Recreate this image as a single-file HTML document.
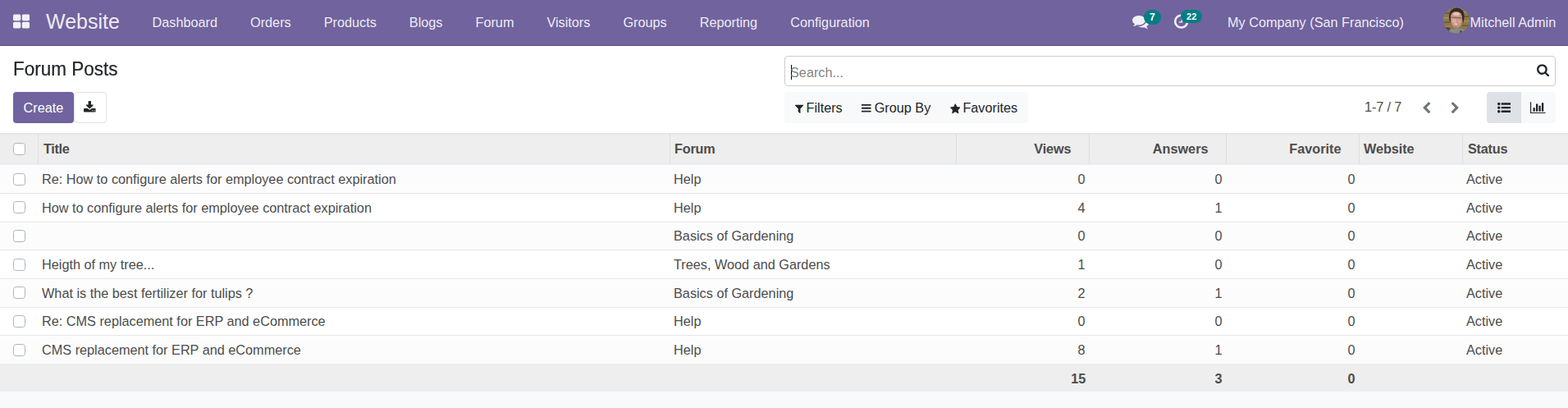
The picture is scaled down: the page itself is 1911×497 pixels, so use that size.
<!DOCTYPE html>
<html lang="en">
<head>
<meta charset="utf-8">
<title>Odoo - Forum Posts</title>
<style>
*{box-sizing:border-box;margin:0;padding:0}
html,body{width:1911px;height:497px;overflow:hidden}
body{font-family:"Liberation Sans",Arial,sans-serif;font-size:16.25px;line-height:24px;color:#4c4c4c;background:#f8f9fa;position:relative}
a{text-decoration:none;color:inherit}
button{font:inherit;color:inherit;border:0;background:none;display:block}
svg.fa{display:block;flex:none}
/* ---------- navbar ---------- */
.navbar{position:absolute;left:0;top:0;width:1911px;height:56px;background:#71639e;border-bottom:1px solid #5f5389;color:rgba(255,255,255,.9)}
.navbar a{position:absolute;top:0;height:55px;line-height:55px;white-space:nowrap}
.navbar .apps{left:16px;width:21px}
.navbar .apps svg{position:absolute;top:15.5px;left:0}
.navbar .brand{left:56px;font-size:25px;line-height:53px}
.menu{position:absolute;left:165.5px;top:0;height:55px;display:flex}
.menu a{position:static;display:block;padding:0 20px}
.tray svg{position:absolute;left:0}
.tray.msg{left:1380px}
.tray.msg svg{top:16.2px}
.tray.act{left:1430.8px}
.tray.act svg{top:16.2px}
.badge{position:absolute;border-radius:20px;background:#017e84;color:#fff;font-weight:bold;text-align:center;line-height:1}
.badge.b1{left:14px;top:11.8px;width:21px;height:18.2px;font-size:12.19px;padding-top:3px}
.badge.b2{left:8.5px;top:11.9px;width:25.7px;height:16px;font-size:11px;padding-top:3.3px}
.company{left:1496px}
.user{left:1759px}
.avatar{position:absolute;left:0;top:8.5px;width:32px;height:32px;line-height:0}
.avatar svg{display:block}
.uname{position:absolute;left:32.5px;top:0}
/* ---------- control panel ---------- */
.cp{position:absolute;left:0;top:56px;width:1911px;height:107px;background:#fff;border-bottom:1px solid #dee2e6}
.title{position:absolute;left:16px;top:12px;transform:scaleY(1.1);transform-origin:0 15.7px;-webkit-text-stroke:0.2px #212529;font-size:22.5px;font-weight:normal;line-height:32px;color:#212529;white-space:nowrap}
.search{position:absolute;left:956px;top:12px;width:940px;height:37px;border:1px solid #ccc;border-radius:4px;background:#fff}
.search .ph{position:absolute;left:6px;top:7px;line-height:24px;color:#848484}
.search .caret{position:absolute;left:7px;top:10px;width:1px;height:18px;background:#000}
.search svg{position:absolute;right:6.5px;top:8px;color:#212529}
.btns{position:absolute;left:16px;top:56px;height:38px}
.create{position:absolute;left:0;top:0;width:74px;height:38px;background:#71639e;color:#fff;border-radius:4px;text-align:center;line-height:38px}
.dl{position:absolute;left:74px;top:0;width:40px;height:38px;border:1px solid #dee2e6;border-radius:4px;background:#fff;color:#212529}
.dl svg{position:absolute;left:11.3px;top:9.7px}
.filters{position:absolute;left:956px;top:56px;height:38px;width:297px;background:#f8f9fa;border-radius:4px;color:#212529;white-space:nowrap}
.filters button{position:absolute;top:0;height:38px;line-height:38px;white-space:nowrap}
.filters button svg{position:absolute;left:0;top:13.6px}
.filters button span{position:absolute;top:0}
.filters .f1{left:12.1px}.filters .f1 span{left:14.4px}.filters .f1 svg{left:0.45px}.filters .f2 svg{top:13.1px}
.filters .f2{left:94.1px}.filters .f2 span{left:15.6px}
.filters .f3{left:201.5px}.filters .f3 span{left:15.9px}
.pager{position:absolute;left:1663px;top:56px;height:38px;line-height:36px;color:#4c4c4c;white-space:nowrap}

.pager .cnt{letter-spacing:-0.13px}
.pager button{position:absolute;top:0;height:38px;width:34px;color:#6f7479}
.pager button svg{position:absolute;top:12.1px}
.pager .pv{left:60px}.pager .pv svg{left:9.95px}
.pager .nx{left:94px}.pager .nx svg{left:10.9px}
.views{position:absolute;left:1812px;top:56px;width:84px;height:38px;background:#f8f9fa;border-radius:4px;overflow:hidden}
.views button{position:absolute;top:0;width:42px;height:38px;color:#212529}
.views button.active{left:0;background:#dee2e6}
.views .v2{left:42px}
.views button svg{position:absolute;top:11px}
.views .v1 svg{left:12.9px}
.views .v2 svg{left:11.4px}
/* ---------- list ---------- */
.content{position:absolute;left:0;top:163px;width:1911px;height:334px}
.thead{position:absolute;left:0;top:0;width:1911px;height:37px;background:#eee;border-top:1px solid #e7e9ec;border-bottom:2px solid #e9ecef;font-weight:bold}
.th,.td{position:absolute;top:0;height:100%;white-space:nowrap}
.th span,.td span{position:absolute;line-height:24px}
.th span{top:6px}
.th.c1,.th.c2,.th.c3,.th.c4,.th.c5,.th.c6,.th.c7{border-left:1px solid #dedede}
.th{height:36px;top:-1px}
.th.sel,.td.sel{left:0;width:46px}
.cb{position:absolute;left:16px;width:15px;height:15px;border:1px solid #adb5bd;border-radius:3.5px;background:#fff}
.th .cb{top:11px}
.td .cb{top:11px}
.c1{left:46px;width:770px}
.c2{left:816px;width:349px}
.c3{left:1165px;width:162px}
.c4{left:1327px;width:167px}
.c5{left:1494px;width:162px}
.c6{left:1656px;width:126px}
.c7{left:1782px;width:129px}
.th span{left:6px}
.td span{left:5px;top:6px}
.th.num span{left:auto;right:21.5px}
.th.c1 span{letter-spacing:-0.32px}
.th.c2 span{left:5px;letter-spacing:-0.2px}
.th.c3 span{letter-spacing:-0.1px}
.th.c6 span{left:5px;letter-spacing:-0.08px}
.th.c7 span{letter-spacing:-0.25px}
.td.num span{left:auto;right:4.4px}
.tbody{position:absolute;left:0;top:0;width:1911px}
.tr{position:absolute;left:0;width:1911px;border-top:1px solid #e4e7ea;background:#fff}
.tr.odd{background:#fcfcfc}
.tr:first-child{border-top-color:#e9ecef}
.tr .td{top:-1px}
.tfoot{position:absolute;left:0;width:1911px;height:34px;background:#eee;font-weight:bold}
.tfoot .td span{top:6px}
.tfoot .c3 span{right:4px;letter-spacing:-0.2px}

</style>
</head>
<body>
<header class="navbar">
  <a class="apps"><svg class="fa fa-th-large" width="20.122" height="21.670" viewBox="0 0 1664 1792" style="" aria-hidden="true"><path fill="currentColor" transform="translate(0,1536) scale(1,-1)" d="M768 512v-384q0 -52 -38 -90t-90 -38h-512q-52 0 -90 38t-38 90v384q0 52 38 90t90 38h512q52 0 90 -38t38 -90zM768 1280v-384q0 -52 -38 -90t-90 -38h-512q-52 0 -90 38t-38 90v384q0 52 38 90t90 38h512q52 0 90 -38t38 -90zM1664 512v-384q0 -52 -38 -90t-90 -38 h-512q-52 0 -90 38t-38 90v384q0 52 38 90t90 38h512q52 0 90 -38t38 -90zM1664 1280v-384q0 -52 -38 -90t-90 -38h-512q-52 0 -90 38t-38 90v384q0 52 38 90t90 38h512q52 0 90 -38t38 -90z"/></svg></a>
  <a class="brand">Website</a>
  <nav class="menu"><a>Dashboard</a><a>Orders</a><a>Products</a><a>Blogs</a><a>Forum</a><a>Visitors</a><a>Groups</a><a>Reporting</a><a>Configuration</a></nav>
  <div class="systray">
    <a class="tray msg"><svg class="fa fa-comments" width="20.312" height="20.312" viewBox="0 0 1792 1792" style="" aria-hidden="true"><path fill="currentColor" transform="translate(0,1536) scale(1,-1)" d="M1408 768q0 -139 -94 -257t-256.5 -186.5t-353.5 -68.5q-86 0 -176 16q-124 -88 -278 -128q-36 -9 -86 -16h-3q-11 0 -20.5 8t-11.5 21q-1 3 -1 6.5t0.5 6.5t2 6l2.5 5t3.5 5.5t4 5t4.5 5t4 4.5q5 6 23 25t26 29.5t22.5 29t25 38.5t20.5 44q-124 72 -195 177t-71 224 q0 139 94 257t256.5 186.5t353.5 68.5t353.5 -68.5t256.5 -186.5t94 -257zM1792 512q0 -120 -71 -224.5t-195 -176.5q10 -24 20.5 -44t25 -38.5t22.5 -29t26 -29.5t23 -25q1 -1 4 -4.5t4.5 -5t4 -5t3.5 -5.5l2.5 -5t2 -6t0.5 -6.5t-1 -6.5q-3 -14 -13 -22t-22 -7 q-50 7 -86 16q-154 40 -278 128q-90 -16 -176 -16q-271 0 -472 132q58 -4 88 -4q161 0 309 45t264 129q125 92 192 212t67 254q0 77 -23 152q129 -71 204 -178t75 -230z"/></svg><span class="badge b1">7</span></a>
    <a class="tray act"><svg class="fa fa-clock-o" width="17.411" height="20.312" viewBox="0 0 1536 1792" style="" aria-hidden="true"><path fill="currentColor" transform="translate(0,1536) scale(1,-1)" d="M896 992v-448q0 -14 -9 -23t-23 -9h-320q-14 0 -23 9t-9 23v64q0 14 9 23t23 9h224v352q0 14 9 23t23 9h64q14 0 23 -9t9 -23zM1312 640q0 148 -73 273t-198 198t-273 73t-273 -73t-198 -198t-73 -273t73 -273t198 -198t273 -73t273 73t198 198t73 273zM1536 640 q0 -209 -103 -385.5t-279.5 -279.5t-385.5 -103t-385.5 103t-279.5 279.5t-103 385.5t103 385.5t279.5 279.5t385.5 103t385.5 -103t279.5 -279.5t103 -385.5z"/></svg><span class="badge b2">22</span></a>
    <a class="company">My Company (San Francisco)</a>
    <a class="user"><span class="avatar"><svg width="32" height="32" viewBox="0 0 32 32"><defs><clipPath id="avc"><ellipse cx="16" cy="15.8" rx="15.9" ry="15.7"/></clipPath><filter id="avb" x="-20%" y="-20%" width="140%" height="140%"><feGaussianBlur stdDeviation="0.65"/></filter></defs><g clip-path="url(#avc)"><rect width="32" height="32" fill="#8a754a"/><g filter="url(#avb)"><rect x="-3" y="-3" width="38" height="38" fill="#8d784b"/><rect x="-3" y="6.5" width="12" height="1.4" fill="#6b5530"/><rect x="-3" y="12" width="12" height="1.6" fill="#a89060"/><rect x="-3" y="17.5" width="12" height="1.4" fill="#6b5530"/><rect x="-3" y="22.5" width="12" height="1.4" fill="#a08858"/><rect x="23" y="5" width="12" height="1.6" fill="#a58d5d"/><rect x="23" y="10.5" width="12" height="1.4" fill="#6b5530"/><rect x="23" y="16" width="12" height="1.6" fill="#a58d5d"/><rect x="23" y="21.5" width="12" height="1.4" fill="#6f5932"/><path d="M-3 35 L-3 25 Q3 23.5 8 24.5 L12 35Z" fill="#5f4228"/><path d="M5 35 L7.5 27.5 Q10 25.5 13 26.5 L21 25.5 Q27 26 29 35Z" fill="#828e8c"/><path d="M20.5 27.5 L24.5 30 L23 35 L18.5 35Z" fill="#48524f"/><path d="M7.3 15 Q5.5 2.5 15.5 0.6 Q26.5 0.5 25.6 13 L24.3 19.5 L22.8 13 Q22.5 7.5 19 6 Q14 4.2 10.8 7 Q9.4 9 9.3 12 L8.8 18.5Z" fill="#302b29"/><path d="M8.9 13 Q8.8 7 13 5.6 Q18.5 4.2 21.5 7.5 Q23 10 23 13.5 Q23 20.5 19.5 24 Q16.5 26.3 13.5 24.8 Q9.3 22 8.9 13Z" fill="#c99685"/><ellipse cx="16" cy="8" rx="4.2" ry="2" fill="#e6c3b5"/><ellipse cx="13.6" cy="16.5" rx="2.6" ry="2.4" fill="#dcab9b"/><ellipse cx="19.4" cy="17" rx="1.8" ry="2" fill="#d7a595"/><path d="M9.5 11.4 L22.6 12.6 L22.5 13.8 L9.4 12.6Z" fill="#4a3c3a" opacity=".6"/><ellipse cx="15.3" cy="20.3" rx="2.2" ry="0.8" fill="#e8d4cd" transform="rotate(6 15 20)"/><path d="M11.5 21.8 Q15 24.6 19.2 22 Q17 26 13.8 25Z" fill="#b27b6b"/></g></g></svg>
</span><span class="uname">Mitchell Admin</span></a>
  </div>
</header>
<section class="cp">
  <h1 class="title">Forum Posts</h1>
  <div class="search"><span class="caret"></span><span class="ph">Search...</span><svg class="fa fa-search" width="15.089" height="16.250" viewBox="0 0 1664 1792" style="" aria-hidden="true"><path fill="currentColor" transform="translate(0,1536) scale(1,-1)" d="M1152 704q0 185 -131.5 316.5t-316.5 131.5t-316.5 -131.5t-131.5 -316.5t131.5 -316.5t316.5 -131.5t316.5 131.5t131.5 316.5zM1664 -128q0 -52 -38 -90t-90 -38q-54 0 -90 38l-343 342q-179 -124 -399 -124q-143 0 -273.5 55.5t-225 150t-150 225t-55.5 273.5 t55.5 273.5t150 225t225 150t273.5 55.5t273.5 -55.5t225 -150t150 -225t55.5 -273.5q0 -220 -124 -399l343 -343q37 -37 37 -90z"/></svg></div>
  <div class="btns"><button class="create">Create</button><button class="dl"><svg class="fa fa-download" width="14.579" height="15.700" viewBox="0 0 1664 1792" style="" aria-hidden="true"><path fill="currentColor" transform="translate(0,1536) scale(1,-1)" d="M1280 192q0 26 -19 45t-45 19t-45 -19t-19 -45t19 -45t45 -19t45 19t19 45zM1536 192q0 26 -19 45t-45 19t-45 -19t-19 -45t19 -45t45 -19t45 19t19 45zM1664 416v-320q0 -40 -28 -68t-68 -28h-1472q-40 0 -68 28t-28 68v320q0 40 28 68t68 28h465l135 -136 q58 -56 136 -56t136 56l136 136h464q40 0 68 -28t28 -68zM1339 985q17 -41 -14 -70l-448 -448q-18 -19 -45 -19t-45 19l-448 448q-31 29 -14 70q17 39 59 39h256v448q0 26 19 45t45 19h256q26 0 45 -19t19 -45v-448h256q42 0 59 -39z"/></svg></button></div>
  <div class="filters"><button class="f1"><svg class="fa fa-filter" width="10.214" height="13.000" viewBox="0 0 1408 1792" style="" aria-hidden="true"><path fill="currentColor" transform="translate(0,1536) scale(1,-1)" d="M1403 1241q17 -41 -14 -70l-493 -493v-742q0 -42 -39 -59q-13 -5 -25 -5q-27 0 -45 19l-256 256q-19 19 -19 45v486l-493 493q-31 29 -14 70q17 39 59 39h1280q42 0 59 -39z"/></svg><span>Filters</span></button><button class="f2"><svg class="fa fa-bars" width="11.606" height="13.540" viewBox="0 0 1536 1792" style="" aria-hidden="true"><path fill="currentColor" transform="translate(0,1536) scale(1,-1)" d="M1536 192v-128q0 -26 -19 -45t-45 -19h-1408q-26 0 -45 19t-19 45v128q0 26 19 45t45 19h1408q26 0 45 -19t19 -45zM1536 704v-128q0 -26 -19 -45t-45 -19h-1408q-26 0 -45 19t-19 45v128q0 26 19 45t45 19h1408q26 0 45 -19t19 -45zM1536 1216v-128q0 -26 -19 -45 t-45 -19h-1408q-26 0 -45 19t-19 45v128q0 26 19 45t45 19h1408q26 0 45 -19t19 -45z"/></svg><span>Group By</span></button><button class="f3"><svg class="fa fa-star" width="12.573" height="13.540" viewBox="0 0 1664 1792" style="" aria-hidden="true"><path fill="currentColor" transform="translate(0,1536) scale(1,-1)" d="M1664 889q0 -22 -26 -48l-363 -354l86 -500q1 -7 1 -20q0 -21 -10.5 -35.5t-30.5 -14.5q-19 0 -40 12l-449 236l-449 -236q-22 -12 -40 -12q-21 0 -31.5 14.5t-10.5 35.5q0 6 2 20l86 500l-364 354q-25 27 -25 48q0 37 56 46l502 73l225 455q19 41 49 41t49 -41l225 -455 l502 -73q56 -9 56 -46z"/></svg><span>Favorites</span></button></div>
  <div class="pager"><span class="cnt">1-7 / 7</span><button class="pv"><svg class="fa fa-chevron-left" width="11.000" height="15.400" viewBox="0 0 1280 1792" style="" aria-hidden="true"><path fill="currentColor" transform="translate(0,1536) scale(1,-1)" d="M1171 1235l-531 -531l531 -531q19 -19 19 -45t-19 -45l-166 -166q-19 -19 -45 -19t-45 19l-742 742q-19 19 -19 45t19 45l742 742q19 19 45 19t45 -19l166 -166q19 -19 19 -45t-19 -45z"/></svg></button><button class="nx"><svg class="fa fa-chevron-right" width="11.000" height="15.400" viewBox="0 0 1280 1792" style="" aria-hidden="true"><path fill="currentColor" transform="translate(0,1536) scale(1,-1)" d="M1107 659l-742 -742q-19 -19 -45 -19t-45 19l-166 166q-19 19 -19 45t19 45l531 531l-531 531q-19 19 -19 45t19 45l166 166q19 19 45 19t45 -19l742 -742q19 -19 19 -45t-19 -45z"/></svg></button></div>
  <div class="views"><button class="v1 active"><svg class="fa fa-list-ul" width="16.250" height="16.250" viewBox="0 0 1792 1792" style="" aria-hidden="true"><path fill="currentColor" transform="translate(0,1536) scale(1,-1)" d="M384 128q0 -80 -56 -136t-136 -56t-136 56t-56 136t56 136t136 56t136 -56t56 -136zM384 640q0 -80 -56 -136t-136 -56t-136 56t-56 136t56 136t136 56t136 -56t56 -136zM1792 224v-192q0 -13 -9.5 -22.5t-22.5 -9.5h-1216q-13 0 -22.5 9.5t-9.5 22.5v192q0 13 9.5 22.5 t22.5 9.5h1216q13 0 22.5 -9.5t9.5 -22.5zM384 1152q0 -80 -56 -136t-136 -56t-136 56t-56 136t56 136t136 56t136 -56t56 -136zM1792 736v-192q0 -13 -9.5 -22.5t-22.5 -9.5h-1216q-13 0 -22.5 9.5t-9.5 22.5v192q0 13 9.5 22.5t22.5 9.5h1216q13 0 22.5 -9.5t9.5 -22.5z M1792 1248v-192q0 -13 -9.5 -22.5t-22.5 -9.5h-1216q-13 0 -22.5 9.5t-9.5 22.5v192q0 13 9.5 22.5t22.5 9.5h1216q13 0 22.5 -9.5t9.5 -22.5z"/></svg></button><button class="v2"><svg class="fa fa-bar-chart" width="18.571" height="16.250" viewBox="0 0 2048 1792" style="" aria-hidden="true"><path fill="currentColor" transform="translate(0,1536) scale(1,-1)" d="M640 640v-512h-256v512h256zM1024 1152v-1024h-256v1024h256zM2048 0v-128h-2048v1536h128v-1408h1920zM1408 896v-768h-256v768h256zM1792 1280v-1152h-256v1152h256z"/></svg></button></div>
</section>
<main class="content">
  <div class="thead">
    <div class="th sel"><i class="cb"></i></div>
    <div class="th c1"><span>Title</span></div><div class="th c2"><span>Forum</span></div>
    <div class="th c3 num"><span>Views</span></div><div class="th c4 num"><span>Answers</span></div><div class="th c5 num"><span>Favorite</span></div>
    <div class="th c6"><span>Website</span></div><div class="th c7"><span>Status</span></div>
  </div>
  <div class="tbody">
<div class="tr odd" style="top:37px;height:35px"><div class="td sel"><i class="cb"></i></div><div class="td c1"><span style="top:6px">Re: How to configure alerts for employee contract expiration</span></div><div class="td c2"><span style="top:6px">Help</span></div><div class="td c3 num"><span style="top:6px">0</span></div><div class="td c4 num"><span style="top:6px">0</span></div><div class="td c5 num"><span style="top:6px">0</span></div><div class="td c6"></div><div class="td c7"><span style="top:6px">Active</span></div></div>
<div class="tr even" style="top:72px;height:35px"><div class="td sel"><i class="cb" style="top:10px"></i></div><div class="td c1"><span style="top:6px">How to configure alerts for employee contract expiration</span></div><div class="td c2"><span style="top:6px">Help</span></div><div class="td c3 num"><span style="top:6px">4</span></div><div class="td c4 num"><span style="top:6px">1</span></div><div class="td c5 num"><span style="top:6px">0</span></div><div class="td c6"></div><div class="td c7"><span style="top:6px">Active</span></div></div>
<div class="tr odd" style="top:107px;height:34px"><div class="td sel"><i class="cb" style="top:10px"></i></div><div class="td c1"><span style="top:5px"></span></div><div class="td c2"><span style="top:5px">Basics of Gardening</span></div><div class="td c3 num"><span style="top:5px">0</span></div><div class="td c4 num"><span style="top:5px">0</span></div><div class="td c5 num"><span style="top:5px">0</span></div><div class="td c6"></div><div class="td c7"><span style="top:5px">Active</span></div></div>
<div class="tr even" style="top:141px;height:35px"><div class="td sel"><i class="cb"></i></div><div class="td c1"><span style="top:6px">Heigth of my tree...</span></div><div class="td c2"><span style="top:6px">Trees, Wood and Gardens</span></div><div class="td c3 num"><span style="top:6px">1</span></div><div class="td c4 num"><span style="top:6px">0</span></div><div class="td c5 num"><span style="top:6px">0</span></div><div class="td c6"></div><div class="td c7"><span style="top:6px">Active</span></div></div>
<div class="tr odd" style="top:176px;height:35px"><div class="td sel"><i class="cb" style="top:10px"></i></div><div class="td c1"><span style="top:6px">What is the best fertilizer for tulips ?</span></div><div class="td c2"><span style="top:6px">Basics of Gardening</span></div><div class="td c3 num"><span style="top:6px">2</span></div><div class="td c4 num"><span style="top:6px">1</span></div><div class="td c5 num"><span style="top:6px">0</span></div><div class="td c6"></div><div class="td c7"><span style="top:6px">Active</span></div></div>
<div class="tr even" style="top:211px;height:34px"><div class="td sel"><i class="cb" style="top:10px"></i></div><div class="td c1"><span style="top:5px">Re: CMS replacement for ERP and eCommerce</span></div><div class="td c2"><span style="top:5px">Help</span></div><div class="td c3 num"><span style="top:5px">0</span></div><div class="td c4 num"><span style="top:5px">0</span></div><div class="td c5 num"><span style="top:5px">0</span></div><div class="td c6"></div><div class="td c7"><span style="top:5px">Active</span></div></div>
<div class="tr odd" style="top:245px;height:35px"><div class="td sel"><i class="cb"></i></div><div class="td c1"><span style="top:6px">CMS replacement for ERP and eCommerce</span></div><div class="td c2"><span style="top:6px">Help</span></div><div class="td c3 num"><span style="top:6px">8</span></div><div class="td c4 num"><span style="top:6px">1</span></div><div class="td c5 num"><span style="top:6px">0</span></div><div class="td c6"></div><div class="td c7"><span style="top:6px">Active</span></div></div>
  </div>
  <div class="tfoot" style="top:280px"><div class="td c3 num"><span>15</span></div><div class="td c4 num"><span>3</span></div><div class="td c5 num"><span>0</span></div></div>
</main>
</body>
</html>
